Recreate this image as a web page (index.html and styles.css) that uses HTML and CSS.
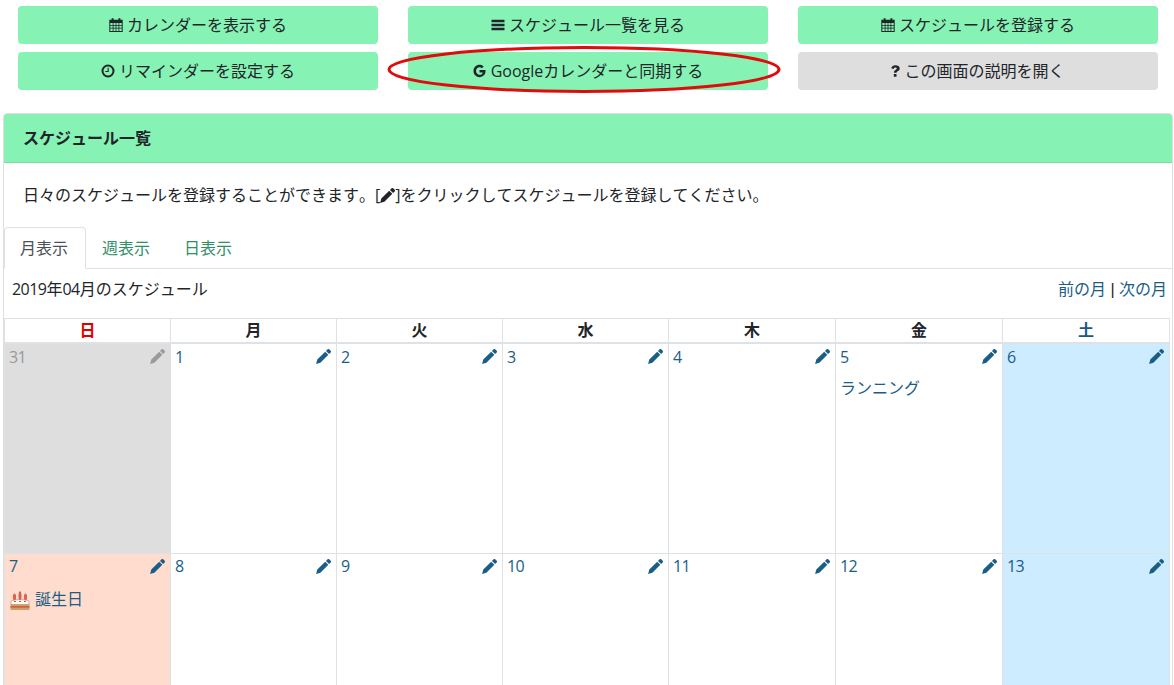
FILE: index.html
```html
<!DOCTYPE html>
<html lang="ja">
<head>
<meta charset="utf-8">
<title>スケジュール一覧</title>
<link rel="stylesheet" href="styles.css">
</head>
<body>
<svg width="0" height="0" class="defs">
  <symbol id="i-cal" viewBox="0 0 14 14"><path fill-rule="evenodd" d="M2.600 0.300h2v1.400h4.800V0.300h2v1.400h2.300V14H0.300V1.700h2.300zM1.300 5v2h2.400V5zm3.200 0v2h2.100V5zm2.900 0v2h2.100V5zm2.900 0v2h2.400V5zM1.300 7.800v2h2.400v-2zm3.200 0v2h2.100v-2zm2.900 0v2h2.100v-2zm2.900 0v2h2.400v-2zM1.300 10.600V13h2.400v-2.400zm3.200 0V13h2.100v-2.400zm2.900 0V13h2.100v-2.400zm2.900 0V13h2.400v-2.400z"/></symbol>
  <symbol id="i-bars" viewBox="0 0 14 14"><path d="M0.500 1.800h13v2.400H.5zM.5 5.800h13v2.400H.5zM.5 9.800h13v2.400H.5z"/></symbol>
  <symbol id="i-clock" viewBox="0 0 14 14"><path fill-rule="evenodd" d="M7 .5a6.500 6.500 0 1 1 0 13A6.500 6.500 0 0 1 7 .5zm0 2a4.500 4.500 0 1 0 0 9 4.500 4.500 0 0 0 0-9zM7.700 3.800v4.200H4.300V6.900h2.300V3.800z"/></symbol>
  <symbol id="i-g" viewBox="0 0 14 14"><path d="M7 6v2.500h3.500C10.200 10 8.900 11 7.100 11 5 11 3.300 9.200 3.300 7S5 3 7.100 3c1 0 1.800.3 2.500 1l1.900-1.900C10.300 1 8.800.4 7.100.4 3.400.4.500 3.300.500 7s2.900 6.600 6.600 6.600c3.800 0 6.400-2.700 6.400-6.500 0-.4 0-.8-.1-1.100z"/></symbol>
  <symbol id="i-q" viewBox="0 0 9 14"><path d="M.2 4.200C.7 2.300 2.400 1.300 4.400 1.300c2.300 0 4.300 1.200 4.300 3.200 0 1.400-1 2.100-2 2.700-.8.500-1.100.8-1.100 1.600H2.900c0-1.600.6-2.300 1.600-2.900.7-.4 1.300-.8 1.300-1.300 0-.6-.6-1-1.400-1-.8 0-1.400.5-1.700 1.300zM2.800 9.900h2.700v2.800H2.800z"/></symbol>
  <symbol id="i-pen" viewBox="0 0 14 14"><path d="M10.800.3a1.100 1.100 0 0 1 1.500 0l1.400 1.400a1.100 1.100 0 0 1 0 1.500l-1.500 1.500-2.900-2.900zM8.600 2.500l2.900 2.900-7.400 7.400-4 1.100 1.100-4z"/></symbol>
</svg>

<nav class="actions">
  <a class="btn"><svg class="ico"><use href="#i-cal"/></svg>カレンダーを表示する</a>
  <a class="btn"><svg class="ico"><use href="#i-bars"/></svg>スケジュール一覧を見る</a>
  <a class="btn"><svg class="ico"><use href="#i-cal"/></svg>スケジュールを登録する</a>
  <a class="btn"><svg class="ico"><use href="#i-clock"/></svg>リマインダーを設定する</a>
  <a class="btn btn-circled"><svg class="ico ico-g"><use href="#i-g"/></svg>Googleカレンダーと同期する
    <svg class="ring" viewBox="0 0 394 47" width="394" height="47"><ellipse cx="197" cy="23.500" rx="195" ry="22" fill="none" stroke="#e00b0b" stroke-width="3"/></svg>
  </a>
  <a class="btn btn-gray"><svg class="ico ico-q"><use href="#i-q"/></svg>この画面の説明を開く</a>
</nav>

<section class="card">
  <h1 class="card-head">スケジュール一覧</h1>
  <p class="lead">日々のスケジュールを登録することができます。[<svg class="ico-inline"><use href="#i-pen"/></svg>]をクリックしてスケジュールを登録してください。</p>
  <ul class="tabs">
    <li class="tab tab-active">月表示</li>
    <li class="tab">週表示</li>
    <li class="tab">日表示</li>
  </ul>
  <div class="cal-bar">
    <span><span class="num">2019</span>年<span class="num">04</span>月のスケジュール</span>
    <span class="pager"><a>前の月</a> | <a>次の月</a></span>
  </div>
  <table class="cal">
    <thead>
      <tr>
        <th class="sun">日</th><th>月</th><th>火</th><th>水</th><th class="wide">木</th><th class="wide">金</th><th class="sat wide">土</th>
      </tr>
    </thead>
    <tbody>
      <tr>
        <td class="off"><div class="day"><span class="num">31</span><svg class="pen"><use href="#i-pen"/></svg></div></td>
        <td><div class="day"><span class="num">1</span><svg class="pen"><use href="#i-pen"/></svg></div></td>
        <td><div class="day"><span class="num">2</span><svg class="pen"><use href="#i-pen"/></svg></div></td>
        <td><div class="day"><span class="num">3</span><svg class="pen"><use href="#i-pen"/></svg></div></td>
        <td><div class="day"><span class="num">4</span><svg class="pen"><use href="#i-pen"/></svg></div></td>
        <td><div class="day"><span class="num">5</span><svg class="pen"><use href="#i-pen"/></svg></div><div class="event">ランニング</div></td>
        <td class="sat-cell"><div class="day"><span class="num">6</span><svg class="pen"><use href="#i-pen"/></svg></div></td>
      </tr>
      <tr>
        <td class="sun-cell"><div class="day"><span class="num">7</span><svg class="pen"><use href="#i-pen"/></svg></div>
          <div class="event event-cake"><svg class="cake" viewBox="0 0 20 20"><ellipse cx="4.500" cy="7" rx="1.500" ry="3.500" fill="#d9604a"/><ellipse cx="10" cy="6" rx="1.500" ry="4.800" fill="#d9604a"/><ellipse cx="15.500" cy="7" rx="1.500" ry="3.500" fill="#d9604a"/><path d="M1 11.500C2.500 9 17.500 9 19 11.500v3H1z" fill="#fffaf4" stroke="#8f7a66" stroke-width=".5"/><path d="M.5 14.500h19V20H.5z" fill="#c9a06e"/><path d="M.5 16.200h19v1.400H.5z" fill="#d8532a"/><path d="M4 11h1.800v1H4zM9 11h1.800v1H9zM14 11h1.800v1H14z" fill="#d8432a"/></svg>誕生日</div></td>
        <td><div class="day"><span class="num">8</span><svg class="pen"><use href="#i-pen"/></svg></div></td>
        <td><div class="day"><span class="num">9</span><svg class="pen"><use href="#i-pen"/></svg></div></td>
        <td><div class="day"><span class="num">10</span><svg class="pen"><use href="#i-pen"/></svg></div></td>
        <td><div class="day"><span class="num">11</span><svg class="pen"><use href="#i-pen"/></svg></div></td>
        <td><div class="day"><span class="num">12</span><svg class="pen"><use href="#i-pen"/></svg></div></td>
        <td class="sat-cell"><div class="day"><span class="num">13</span><svg class="pen"><use href="#i-pen"/></svg></div></td>
      </tr>
    </tbody>
  </table>
</section>
</body>
</html>
```
FILE: styles.css
```css
* { box-sizing: border-box; }
html, body { height: 685px; overflow: hidden; }
body {
  margin: 0;
  background: #fff;
  color: #212529;
  font-family: "Open Sans", "Noto Sans CJK JP", sans-serif;
  font-size: 16px;
  line-height: 24px;
  font-kerning: none;
}
.defs { position: absolute; }
.num { letter-spacing: -0.55px; }

.actions {
  display: grid;
  grid-template-columns: repeat(3, 360px);
  column-gap: 30px;
  row-gap: 8px;
  padding: 6px 0 0 18px;
}
.btn {
  position: relative;
  display: flex;
  align-items: center;
  justify-content: center;
  height: 38px;
  background: #86f3b5;
  border-radius: 4px;
  color: #212529;
}
.btn-gray { background: #dedede; }
.ico { width: 14px; height: 14px; margin-right: 4px; fill: #212529; flex: none; }
.ico-g { width: 13px; margin-right: 5px; }
.ico-q { width: 9px; }
.ring { position: absolute; left: -21px; top: -6px; pointer-events: none; }

.card {
  margin: 23px 1px 0 3px;
  border: 1px solid #dfdfdf;
  border-radius: 4px 4px 0 0;
}
.card-head {
  margin: 0;
  height: 49px;
  padding: 12px 19px;
  background: #86f3b5;
  border-bottom: 1px solid #7bdca5;
  border-radius: 3px 3px 0 0;
  font-size: 16px;
  line-height: 24px;
  font-weight: 700;
}
.lead { margin: 0; padding: 20px 19px 19px; height: 64px; white-space: nowrap; }
.ico-inline { width: 15px; height: 15px; fill: #212529; vertical-align: -2px; }

.tabs {
  display: flex;
  list-style: none;
  margin: 0;
  padding: 0;
  height: 42px;
  border-bottom: 1px solid #dee2e6;
}
.tab {
  height: 42px;
  padding: 8px 17px 8px 15px;
  color: #2f8f67;
  border: 1px solid transparent;
  border-radius: 4px 4px 0 0;
}
.tab-active {
  color: #495057;
  background: #fff;
  border-color: #dee2e6 #dee2e6 #fff;
}

.cal-bar {
  display: flex;
  justify-content: space-between;
  height: 49px;
  padding: 8px 5px 0 8px;
}
.pager { margin-top: 1px; font-family: "Liberation Sans", "Noto Sans CJK JP", sans-serif; }
.pager a { color: #1a5e86; }

.cal {
  width: 1165px;
  table-layout: fixed;
  border-collapse: collapse;
}
.cal th {
  width: 166px;
  height: 24px;
  padding: 0;
  border: 1px solid #dee2e6;
  border-bottom-width: 2px;
  font-weight: 700;
  text-align: center;
  line-height: 22px;
  background: #fff;
}
.cal th.wide { width: 167px; }
.cal .sun { color: #e00000; }
.cal .sat { color: #155a82; }
.cal td {
  height: 211px;
  padding: 0 5px 0 4px;
  border: 1px solid #dee2e6;
  vertical-align: top;
  color: #1a5e86;
}
.cal .off { background: #dedede; color: #9a9a9a; }
.cal .sat-cell { background: #cdecff; }
.cal .sun-cell { background: #ffdccd; }
.day {
  display: flex;
  justify-content: space-between;
  align-items: center;
  height: 24px;
  margin-top: 1px;
}
tbody tr + tr .day { margin-top: 0; }
.pen { width: 15px; height: 15px; fill: #1a5e86; }
.off .pen { fill: #9a9a9a; }
.event { margin-top: 7px; display: flex; align-items: center; }
.event-cake { margin-top: 9px; padding-left: 1px; }
.cake { width: 20px; height: 20px; margin-right: 5px; margin-top: 1px; }
```
